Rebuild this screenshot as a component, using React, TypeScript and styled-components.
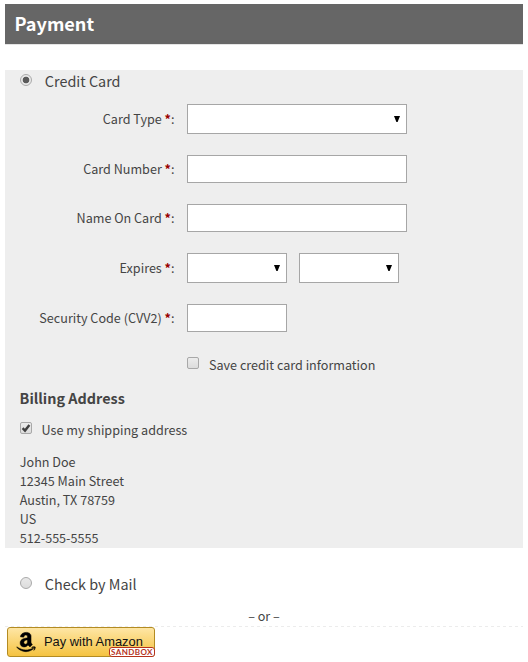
import React from "react";
import styled, { createGlobalStyle } from "styled-components";
import { FaAmazon } from "react-icons/fa";

const GlobalStyle = createGlobalStyle`
  *, *::before, *::after { box-sizing: border-box; }
  body {
    margin: 0;
    background: #fff;
    color: #444;
    font-family: "Noto Sans CJK SC", "Noto Sans", sans-serif;
    font-size: 12.6px;
    line-height: 19px;
  }
`;

const Page = styled.main`
  width: 528px;
  height: 662px;
  padding: 4px 5px 0;
  overflow: hidden;
`;

const Title = styled.h1`
  margin: 0;
  height: 41px;
  padding: 0 9.5px;
  background: #666;
  border-bottom: 1px solid #e4e4e4;
  color: #fff;
  font-size: 18.1px;
  font-weight: 700;
  line-height: 38px;
`;

const Panel = styled.section`
  margin-top: 25px;
  height: 478px;
  background: #eee;
`;

const Method = styled.label`
  display: flex;
  align-items: flex-start;
  gap: 12.8px;
  height: 34px;
  padding-left: 15px;
  font-size: 14.4px;
  line-height: 22px;
`;

const RadioDot = styled.span<{ $on?: boolean }>`
  width: 12px;
  height: 12px;
  margin-top: 4px;
  border: 1px solid #aaa;
  border-radius: 50%;
  background: ${(p) =>
    p.$on
      ? "radial-gradient(circle, #5a5a5a 0 2.9px, #e8e8e8 3.7px)"
      : "linear-gradient(#e9e9e9, #dcdcdc)"};
`;

const Fields = styled.div`
  display: grid;
  row-gap: 21px;
`;

const Row = styled.div`
  display: grid;
  grid-template-columns: 170px auto;
  column-gap: 12px;
  align-items: center;
`;

const Label = styled.span`
  padding: 0 0.5px 2px 0;
  text-align: right;
`;

const Star = styled.span`
  color: #900;
  font-weight: 700;
`;

const Controls = styled.div`
  display: flex;
  gap: 12px;
`;

const TextBox = styled.div<{ $w: number }>`
  width: ${(p) => p.$w}px;
  height: 28px;
  background: #fff;
  border: 1px solid #a6a6a6;
`;

const SelectBox = styled(TextBox)`
  display: flex;
  align-items: center;
  justify-content: flex-end;
  height: 30px;
  padding-right: 6px;
`;

const CheckLine = styled.label<{ $left: number; $gap: number }>`
  display: flex;
  align-items: flex-start;
  gap: ${(p) => p.$gap}px;
  padding-left: ${(p) => p.$left}px;
`;

const SaveLine = styled(CheckLine)`
  margin-top: 23px;
`;

const CheckBox = styled.span`
  display: flex;
  width: 12px;
  height: 12px;
  margin-top: 2px;
  border: 1px solid #a8a8a8;
  border-radius: 2px;
  background: linear-gradient(#ececec, #dcdcdc);
`;

const Subtitle = styled.h2`
  margin: 14px 0 12px;
  padding-left: 14.6px;
  font-size: 14.4px;
  font-weight: 700;
  line-height: 20px;
`;

const Address = styled.address`
  margin-top: 13px;
  padding-left: 14.8px;
  font-style: normal;
  font-size: 12.6px;
  line-height: 19px;
`;

const MailMethod = styled(Method)`
  margin-top: 25px;
`;

const Or = styled.div`
  height: 19px;
  line-height: 17px;
  text-align: center;
`;

const Rule = styled.div`
  height: 1px;
  background: repeating-linear-gradient(90deg, #ececec 0 3px, transparent 3px 6px);
`;

const AmazonButton = styled.button`
  display: grid;
  grid-template: 28px / 19px auto;
  column-gap: 8px;
  align-items: center;
  justify-content: start;
  width: 148px;
  height: 30px;
  margin: 0 0 0 2px;
  padding: 0 0 0 9px;
  border: 1px solid #b38b22;
  border-radius: 3px;
  background: linear-gradient(#fee6a5, #f5c341);
  color: #111;
  font: 12.9px/28px "Liberation Sans", Arial, sans-serif;
  text-align: left;
  white-space: nowrap;
`;

const ButtonFrame = styled.div`
  position: relative;
  width: 150px;
`;

const Sandbox = styled.span`
  position: absolute;
  right: 0;
  bottom: 0;
  width: 46px;
  height: 10px;
  border: 1px solid #b5321c;
  border-radius: 3px;
  background: #fff;
  color: #b5321c;
  font: 700 8px/8px Lato, sans-serif;
  letter-spacing: 0.4px;
  text-align: center;
  white-space: nowrap;
`;

const AmazonMark = styled(FaAmazon)`
  width: 22px;
  height: 22px;
  margin-left: -2px;
  color: #000;
  stroke: #000;
  stroke-width: 12px;
`;

const Arrow = () => (
  <svg width="6" height="6" viewBox="0 0 6 6">
    <path d="M0 0h6L3.6 6H2.4z" fill="#000" />
  </svg>
);

const Tick = () => (
  <svg width="10" height="10" viewBox="0 0 10 10">
    <path d="M1.6 5.2L4 7.6L8.4 2" fill="none" stroke="#404040" strokeWidth="2.4" />
  </svg>
);

const Field = ({ label, children }: { label: string; children: React.ReactNode }) => (
  <Row>
    <Label>
      {label} <Star>*</Star>:
    </Label>
    <Controls>{children}</Controls>
  </Row>
);

export default function App() {
  return (
    <>
      <GlobalStyle />
      <Page>
        <Title>Payment</Title>
        <Panel>
          <Method>
            <RadioDot $on />
            Credit Card
          </Method>
          <Fields>
            <Field label="Card Type">
              <SelectBox $w={220}><Arrow /></SelectBox>
            </Field>
            <Field label="Card Number"><TextBox $w={220} /></Field>
            <Field label="Name On Card"><TextBox $w={220} /></Field>
            <Field label="Expires">
              <SelectBox $w={100}><Arrow /></SelectBox>
              <SelectBox $w={100}><Arrow /></SelectBox>
            </Field>
            <Field label="Security Code (CVV2)"><TextBox $w={100} /></Field>
          </Fields>
          <SaveLine $left={182} $gap={10}>
            <CheckBox />
            Save credit card information
          </SaveLine>
          <Subtitle>Billing Address</Subtitle>
          <CheckLine $left={15} $gap={9.6}>
            <CheckBox><Tick /></CheckBox>
            Use my shipping address
          </CheckLine>
          <Address>
            John Doe<br />
            12345 Main Street<br />
            Austin, TX 78759<br />
            US<br />
            512-555-5555
          </Address>
        </Panel>
        <MailMethod>
          <RadioDot />
          Check by Mail
        </MailMethod>
        <Or>– or –</Or>
        <Rule />
        <ButtonFrame>
          <AmazonButton>
            <AmazonMark />
            Pay with Amazon
          </AmazonButton>
          <Sandbox>SANDBOX</Sandbox>
        </ButtonFrame>
      </Page>
    </>
  );
}
